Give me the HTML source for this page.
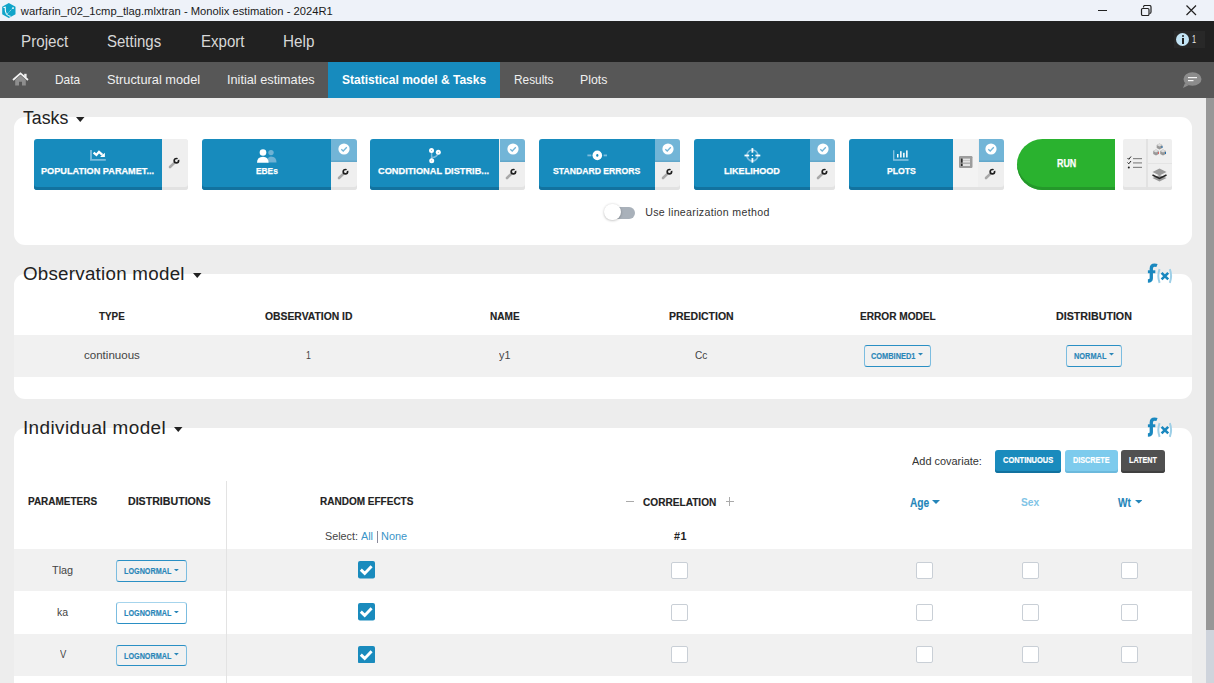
<!DOCTYPE html>
<html><head><meta charset="utf-8">
<style>
*{box-sizing:border-box;margin:0;padding:0}
html,body{width:1214px;height:683px;overflow:hidden;background:#ededed;font-family:"Liberation Sans",sans-serif;position:relative}
.abs{position:absolute}
.t{position:absolute;white-space:nowrap;line-height:1;transform-origin:0 0}
</style></head><body>
<div class="abs" style="left:0px;top:0px;width:1214px;height:21px;background:#eef2f9"></div>
<svg class="abs" style="left:2px;top:3px" width="14" height="15" viewBox="0 0 14 15"><polygon points="6.8,0 13.5,3.8 13.5,11.2 6.8,15 0.2,11.2 0.2,3.8" fill="#10a4c9"/><path d="M1.6,4.2 Q2.2,4.8 3.2,4.3 Q3,9 4.4,11 Q6,12.8 8.5,13.4" fill="none" stroke="#fff" stroke-width="1.1"/><path d="M5.2,11 L10.8,5" stroke="#bfe8f3" stroke-width="0.9" stroke-dasharray="1.2,1"/><rect x="10.4" y="4.2" width="1.3" height="1.8" fill="#fff"/></svg>
<div class="t" style="left:20.82px;top:6.00px;font-size:11.19px;color:#1a1a1a;letter-spacing:0.006px;">warfarin_r02_1cmp_tlag.mlxtran - Monolix estimation - 2024R1</div>
<div class="abs" style="left:1098px;top:10px;width:9px;height:1px;background:#222"></div>
<svg class="abs" style="left:1140px;top:5px" width="13" height="11" viewBox="0 0 13 11"><rect x="1.5" y="3.5" width="7.5" height="7" rx="1.2" fill="none" stroke="#222" stroke-width="1.2"/><path d="M3.5,2.5 V2 Q3.5,0.5 5,0.5 H9.5 Q11,0.5 11,2 V7 Q11,8.5 9.5,8.5" fill="none" stroke="#222" stroke-width="1.2"/></svg>
<svg class="abs" style="left:1186px;top:5px" width="11" height="11" viewBox="0 0 11 11"><path d="M0.5,0.5 L10,10 M10,0.5 L0.5,10" stroke="#222" stroke-width="1.2"/></svg>
<div class="abs" style="left:0px;top:21px;width:1214px;height:41px;background:#212121"></div>
<div class="t" style="left:20.70px;top:34.00px;font-size:15.84px;color:#d8d8d8;transform:scaleX(0.9594);">Project</div>
<div class="t" style="left:106.80px;top:34.00px;font-size:15.84px;color:#d8d8d8;transform:scaleX(0.9469);">Settings</div>
<div class="t" style="left:200.50px;top:34.00px;font-size:15.84px;color:#d8d8d8;transform:scaleX(0.9501);">Export</div>
<div class="t" style="left:283.00px;top:34.00px;font-size:15.84px;color:#d8d8d8;transform:scaleX(0.9635);">Help</div>
<div class="abs" style="left:1174px;top:31px;width:31px;height:17px;background:#282828"></div>
<div class="abs" style="left:1176px;top:33px;width:13.3px;height:13.3px;background:#c3e4f5;border-radius:50%"></div>
<div class="abs" style="left:1181.6px;top:35.3px;width:2.4px;height:1.8px;background:#222;border-radius:1px"></div>
<div class="abs" style="left:1181.6px;top:38.2px;width:2.4px;height:5.8px;background:#222"></div>
<div class="t" style="left:1192.30px;top:34.00px;font-size:11.05px;color:#e8e8e8;transform:scaleX(0.6676);">1</div>
<div class="abs" style="left:0px;top:62.4px;width:1214px;height:35.6px;background:#575757"></div>
<svg class="abs" style="left:12px;top:72px" width="17" height="14" viewBox="0 0 17 14"><path d="M3.2,8 V13.5 H7 V9.8 H10 V13.5 H13.8 V8 L8.5,3.2 Z" fill="#8e8e8e"/><path d="M1,8 L8.5,1.4 L16,8" fill="none" stroke="#f2f2f2" stroke-width="1.8"/><rect x="12.2" y="1.8" width="2.4" height="3.8" fill="#eee"/></svg>
<div class="t" style="left:54.90px;top:73.00px;font-size:13.37px;color:#f0f0f0;transform:scaleX(0.8883);">Data</div>
<div class="t" style="left:106.80px;top:73.00px;font-size:13.37px;color:#f0f0f0;transform:scaleX(0.9573);">Structural model</div>
<div class="t" style="left:227.00px;top:73.00px;font-size:13.37px;color:#f0f0f0;transform:scaleX(0.9516);">Initial estimates</div>
<div class="abs" style="left:328px;top:62.4px;width:171.6px;height:35.6px;background:#178bbe"></div>
<div class="t" style="left:341.70px;top:73.00px;font-size:13.37px;color:#fff;font-weight:bold;transform:scaleX(0.9003);">Statistical model &amp; Tasks</div>
<div class="t" style="left:513.50px;top:73.00px;font-size:13.37px;color:#f0f0f0;transform:scaleX(0.8860);">Results</div>
<div class="t" style="left:580.00px;top:73.00px;font-size:13.37px;color:#f0f0f0;transform:scaleX(0.9217);">Plots</div>
<svg class="abs" style="left:1182px;top:72px" width="20" height="17" viewBox="0 0 20 17"><ellipse cx="10.5" cy="7" rx="9" ry="6.8" fill="#8c8c8c"/><path d="M3,11 L1,16 L7,13 Z" fill="#8c8c8c"/><rect x="6" y="5" width="9" height="1.2" fill="#f4f4f4"/><rect x="6" y="8" width="5.5" height="1.2" fill="#f4f4f4"/></svg>
<div class="abs" style="left:1206px;top:98px;width:8px;height:585px;background:#cfd4dc"></div>
<div class="abs" style="left:1206px;top:98px;width:8px;height:532.4px;background:#979797"></div>
<div class="abs" style="left:14px;top:117.2px;width:1178px;height:127.5px;background:#fff;border-radius:11px"></div>
<div class="t" style="left:23.20px;top:108.00px;font-size:19.19px;color:#222;transform:scaleX(0.9237);">Tasks</div>
<svg class="abs" style="left:76px;top:116.5px" width="9" height="5" viewBox="0 0 9 5"><path d="M0,0 H8.5 L4.25,5 Z" fill="#222"/></svg>
<div class="abs" style="left:36.5px;top:139px;width:151.9px;height:51px;background:#efefef;border-radius:0 3px 3px 0;box-shadow:inset 0 -3px 0 #e2e2e2"></div>
<div class="abs" style="left:33.5px;top:139px;width:128.9px;height:51px;background:#178bbd;border-radius:3px 0 0 3px;box-shadow:inset 0 -3px 0 #12729f"></div>
<div class="abs" style="left:162.4px;top:139px;width:26.0px;height:51px;background:#efefef;border-radius:0 3px 3px 0;box-shadow:inset 0 -3px 0 #e2e2e2"></div>
<div class="t" style="left:41.30px;top:166.00px;font-size:9.59px;color:#fff;font-weight:bold;transform:scaleX(0.9553);-webkit-text-stroke:0.25px #fff;">POPULATION PARAMET...</div>
<svg class="abs" style="left:168.4px;top:157px" width="12" height="12" viewBox="0 0 12 12"><path d="M2,10 L6.6,5.6" stroke="#a9a9a9" stroke-width="2.6" stroke-linecap="round"/><circle cx="8.4" cy="3.7" r="2.2" fill="none" stroke="#1e1e1e" stroke-width="1.7"/><path d="M8.4,3.7 L10.6,0 L12,2.2 Z" fill="#efefef"/></svg>
<div class="abs" style="left:205px;top:139px;width:151.8px;height:51px;background:#efefef;border-radius:0 3px 3px 0;box-shadow:inset 0 -3px 0 #e2e2e2"></div>
<div class="abs" style="left:202px;top:139px;width:129.2px;height:51px;background:#178bbd;border-radius:3px 0 0 3px;box-shadow:inset 0 -3px 0 #12729f"></div>
<div class="abs" style="left:331.2px;top:139px;width:25.600000000000023px;height:51px;background:#efefef;border-radius:0 3px 3px 0;box-shadow:inset 0 -3px 0 #e2e2e2"></div>
<div class="t" style="left:256.00px;top:166.00px;font-size:9.59px;color:#fff;font-weight:bold;transform:scaleX(0.8700);-webkit-text-stroke:0.25px #fff;">EBEs</div>
<div class="abs" style="left:331.2px;top:139px;width:25.600000000000023px;height:23.4px;background:#72b5d7;border-radius:0 3px 0 0;box-shadow:inset 0 -1.5px 0 #62a7ca"></div>
<svg class="abs" style="left:338.2px;top:143px" width="12" height="12" viewBox="0 0 12 12"><circle cx="6" cy="6" r="5.6" fill="#fff"/><path d="M3.3,6.2 L5.2,8 L8.8,4.2" fill="none" stroke="#72b5d7" stroke-width="1.3"/></svg>
<svg class="abs" style="left:337.0px;top:167.5px" width="12" height="12" viewBox="0 0 12 12"><path d="M2,10 L6.6,5.6" stroke="#a9a9a9" stroke-width="2.6" stroke-linecap="round"/><circle cx="8.4" cy="3.7" r="2.2" fill="none" stroke="#1e1e1e" stroke-width="1.7"/><path d="M8.4,3.7 L10.6,0 L12,2.2 Z" fill="#efefef"/></svg>
<div class="abs" style="left:373.4px;top:139px;width:151.89999999999998px;height:51px;background:#efefef;border-radius:0 3px 3px 0;box-shadow:inset 0 -3px 0 #e2e2e2"></div>
<div class="abs" style="left:370.4px;top:139px;width:129.10000000000002px;height:51px;background:#178bbd;border-radius:3px 0 0 3px;box-shadow:inset 0 -3px 0 #12729f"></div>
<div class="abs" style="left:499.5px;top:139px;width:25.799999999999955px;height:51px;background:#efefef;border-radius:0 3px 3px 0;box-shadow:inset 0 -3px 0 #e2e2e2"></div>
<div class="t" style="left:378.20px;top:166.00px;font-size:9.59px;color:#fff;font-weight:bold;transform:scaleX(0.9630);-webkit-text-stroke:0.25px #fff;">CONDITIONAL DISTRIB...</div>
<div class="abs" style="left:499.5px;top:139px;width:25.799999999999955px;height:23.4px;background:#72b5d7;border-radius:0 3px 0 0;box-shadow:inset 0 -1.5px 0 #62a7ca"></div>
<svg class="abs" style="left:506.59999999999997px;top:143px" width="12" height="12" viewBox="0 0 12 12"><circle cx="6" cy="6" r="5.6" fill="#fff"/><path d="M3.3,6.2 L5.2,8 L8.8,4.2" fill="none" stroke="#72b5d7" stroke-width="1.3"/></svg>
<svg class="abs" style="left:505.4px;top:167.5px" width="12" height="12" viewBox="0 0 12 12"><path d="M2,10 L6.6,5.6" stroke="#a9a9a9" stroke-width="2.6" stroke-linecap="round"/><circle cx="8.4" cy="3.7" r="2.2" fill="none" stroke="#1e1e1e" stroke-width="1.7"/><path d="M8.4,3.7 L10.6,0 L12,2.2 Z" fill="#efefef"/></svg>
<div class="abs" style="left:542.3px;top:139px;width:137.9000000000001px;height:51px;background:#efefef;border-radius:0 3px 3px 0;box-shadow:inset 0 -3px 0 #e2e2e2"></div>
<div class="abs" style="left:539.3px;top:139px;width:115.70000000000005px;height:51px;background:#178bbd;border-radius:3px 0 0 3px;box-shadow:inset 0 -3px 0 #12729f"></div>
<div class="abs" style="left:655px;top:139px;width:25.200000000000045px;height:51px;background:#efefef;border-radius:0 3px 3px 0;box-shadow:inset 0 -3px 0 #e2e2e2"></div>
<div class="t" style="left:553.30px;top:166.00px;font-size:9.59px;color:#fff;font-weight:bold;transform:scaleX(0.9027);-webkit-text-stroke:0.25px #fff;">STANDARD ERRORS</div>
<div class="abs" style="left:655px;top:139px;width:25.200000000000045px;height:23.4px;background:#72b5d7;border-radius:0 3px 0 0;box-shadow:inset 0 -1.5px 0 #62a7ca"></div>
<svg class="abs" style="left:661.8000000000001px;top:143px" width="12" height="12" viewBox="0 0 12 12"><circle cx="6" cy="6" r="5.6" fill="#fff"/><path d="M3.3,6.2 L5.2,8 L8.8,4.2" fill="none" stroke="#72b5d7" stroke-width="1.3"/></svg>
<svg class="abs" style="left:660.6px;top:167.5px" width="12" height="12" viewBox="0 0 12 12"><path d="M2,10 L6.6,5.6" stroke="#a9a9a9" stroke-width="2.6" stroke-linecap="round"/><circle cx="8.4" cy="3.7" r="2.2" fill="none" stroke="#1e1e1e" stroke-width="1.7"/><path d="M8.4,3.7 L10.6,0 L12,2.2 Z" fill="#efefef"/></svg>
<div class="abs" style="left:697.2px;top:139px;width:137.89999999999998px;height:51px;background:#efefef;border-radius:0 3px 3px 0;box-shadow:inset 0 -3px 0 #e2e2e2"></div>
<div class="abs" style="left:694.2px;top:139px;width:115.69999999999993px;height:51px;background:#178bbd;border-radius:3px 0 0 3px;box-shadow:inset 0 -3px 0 #12729f"></div>
<div class="abs" style="left:809.9px;top:139px;width:25.200000000000045px;height:51px;background:#efefef;border-radius:0 3px 3px 0;box-shadow:inset 0 -3px 0 #e2e2e2"></div>
<div class="t" style="left:724.20px;top:166.00px;font-size:9.59px;color:#fff;font-weight:bold;transform:scaleX(0.9466);-webkit-text-stroke:0.25px #fff;">LIKELIHOOD</div>
<div class="abs" style="left:809.9px;top:139px;width:25.200000000000045px;height:23.4px;background:#72b5d7;border-radius:0 3px 0 0;box-shadow:inset 0 -1.5px 0 #62a7ca"></div>
<svg class="abs" style="left:816.7px;top:143px" width="12" height="12" viewBox="0 0 12 12"><circle cx="6" cy="6" r="5.6" fill="#fff"/><path d="M3.3,6.2 L5.2,8 L8.8,4.2" fill="none" stroke="#72b5d7" stroke-width="1.3"/></svg>
<svg class="abs" style="left:815.5px;top:167.5px" width="12" height="12" viewBox="0 0 12 12"><path d="M2,10 L6.6,5.6" stroke="#a9a9a9" stroke-width="2.6" stroke-linecap="round"/><circle cx="8.4" cy="3.7" r="2.2" fill="none" stroke="#1e1e1e" stroke-width="1.7"/><path d="M8.4,3.7 L10.6,0 L12,2.2 Z" fill="#efefef"/></svg>
<div class="abs" style="left:852.1px;top:139px;width:151.60000000000002px;height:51px;background:#efefef;border-radius:0 3px 3px 0;box-shadow:inset 0 -3px 0 #e2e2e2"></div>
<div class="abs" style="left:849.1px;top:139px;width:103.60000000000002px;height:51px;background:#178bbd;border-radius:3px 0 0 3px;box-shadow:inset 0 -3px 0 #12729f"></div>
<div class="abs" style="left:952.7px;top:139px;width:25.799999999999955px;height:51px;background:#f3f3f3;box-shadow:inset 0 -3px 0 #e2e2e2"></div>
<div class="abs" style="left:978.5px;top:139px;width:25.200000000000045px;height:51px;background:#efefef;border-radius:0 3px 3px 0;box-shadow:inset 0 -3px 0 #e2e2e2"></div>
<div class="t" style="left:886.60px;top:166.00px;font-size:9.59px;color:#fff;font-weight:bold;transform:scaleX(0.9036);-webkit-text-stroke:0.25px #fff;">PLOTS</div>
<div class="abs" style="left:978.5px;top:139px;width:25.200000000000045px;height:23.4px;background:#72b5d7;border-radius:0 3px 0 0;box-shadow:inset 0 -1.5px 0 #62a7ca"></div>
<svg class="abs" style="left:985.3000000000001px;top:143px" width="12" height="12" viewBox="0 0 12 12"><circle cx="6" cy="6" r="5.6" fill="#fff"/><path d="M3.3,6.2 L5.2,8 L8.8,4.2" fill="none" stroke="#72b5d7" stroke-width="1.3"/></svg>
<svg class="abs" style="left:984.1px;top:167.5px" width="12" height="12" viewBox="0 0 12 12"><path d="M2,10 L6.6,5.6" stroke="#a9a9a9" stroke-width="2.6" stroke-linecap="round"/><circle cx="8.4" cy="3.7" r="2.2" fill="none" stroke="#1e1e1e" stroke-width="1.7"/><path d="M8.4,3.7 L10.6,0 L12,2.2 Z" fill="#efefef"/></svg>
<svg class="abs" style="left:90px;top:150px" width="16" height="12" viewBox="0 0 16 12"><path d="M1,0 V9.9 H15.8" fill="none" stroke="#7bbcdd" stroke-width="1.9"/><path d="M3.6,2.6 L6.4,4.9 L9,1.8 L12.4,4.8" fill="none" stroke="#fff" stroke-width="2.3"/><polygon points="10,6.9 14.9,6.9 14.9,2.8" fill="#fff"/></svg>
<svg class="abs" style="left:256.5px;top:148.5px" width="20" height="14" viewBox="0 0 20 14"><circle cx="14" cy="3.6" r="2.7" fill="#6fb2d4"/><path d="M10,13.5 Q10,7.5 14,7.5 Q19.5,7.5 19.5,13.5 Z" fill="#6fb2d4"/><circle cx="6" cy="3.5" r="3.3" fill="#fff"/><path d="M0,13.8 Q0,7.8 6,7.8 Q11.6,7.8 11.6,13.8 Z" fill="#fff"/></svg>
<svg class="abs" style="left:428px;top:147px" width="14" height="17" viewBox="0 0 14 17"><path d="M3.6,3.4 V13.7 M3.6,10.6 Q9.5,10.2 10.3,5.3" fill="none" stroke="#7bbcdd" stroke-width="1.5"/><circle cx="3.5" cy="3.4" r="2.5" fill="#fff"/><circle cx="10.3" cy="5.3" r="2.5" fill="#fff"/><circle cx="3.7" cy="13.7" r="2.5" fill="#fff"/><circle cx="3.5" cy="3.4" r="0.5" fill="#8ab"/><circle cx="10.3" cy="5.3" r="0.5" fill="#5ab"/><circle cx="3.7" cy="13.7" r="0.5" fill="#8ab"/></svg>
<svg class="abs" style="left:586.5px;top:150px" width="21" height="11" viewBox="0 0 21 11"><rect x="0.4" y="4.5" width="3.9" height="1.8" fill="#7bbcdd"/><rect x="16.6" y="4.5" width="3.4" height="1.8" fill="#7bbcdd"/><circle cx="10.3" cy="5.4" r="4.8" fill="#fff"/><ellipse cx="10.3" cy="5.4" rx="1.1" ry="1.4" fill="#178bbd"/></svg>
<svg class="abs" style="left:743.5px;top:147px" width="17" height="17" viewBox="0 0 17 17"><circle cx="8.4" cy="8.5" r="5.5" fill="none" stroke="#7dbddf" stroke-width="1.6"/><rect x="7.5" y="1.1" width="1.8" height="4.6" fill="#fff"/><rect x="7.5" y="11.1" width="1.8" height="4.6" fill="#fff"/><rect x="0.5" y="7.6" width="4.7" height="1.8" fill="#fff"/><rect x="11.4" y="7.6" width="4.9" height="1.8" fill="#fff"/><circle cx="8.4" cy="8.5" r="0.8" fill="#fff"/></svg>
<svg class="abs" style="left:893px;top:150px" width="16" height="11" viewBox="0 0 16 11"><path d="M0.7,0.3 V10 H15.5" fill="none" stroke="#8cc5e2" stroke-width="1.3"/><rect x="4" y="4" width="1.5" height="3.5" fill="#fff"/><rect x="7.1" y="1.2" width="1.5" height="6.3" fill="#fff"/><rect x="10.1" y="2.8" width="1.5" height="4.7" fill="#fff"/><rect x="13.1" y="0.4" width="1.5" height="7.1" fill="#fff"/></svg>
<svg class="abs" style="left:959px;top:156.2px" width="13.5" height="12" viewBox="0 0 13.5 12"><rect x="0" y="0" width="13.5" height="12" rx="1.2" fill="#9d9d9d"/><rect x="3.4" y="2.6" width="7.6" height="4" fill="#e4e4e4"/><rect x="3.4" y="4.3" width="7.6" height="0.6" fill="#b5b5b5"/><rect x="3.4" y="7.7" width="7.6" height="2.3" fill="#e4e4e4"/><rect x="2" y="2.6" width="1.6" height="4" fill="#2a2a2a"/><rect x="2" y="7.7" width="1.6" height="2.3" fill="#2a2a2a"/></svg>
<div class="abs" style="left:1017.1px;top:139px;width:97.7px;height:51px;background:#2ab22f;border-radius:25.5px 0 0 25.5px;box-shadow:inset 0 -3px 0 #24982a"></div>
<div class="t" style="left:1056.50px;top:159.00px;font-size:10.47px;color:#fff;font-weight:bold;transform:scaleX(0.8510);-webkit-text-stroke:0.25px #fff;">RUN</div>
<div class="abs" style="left:1123.2px;top:139px;width:48.7px;height:51px;background:#efefef;border-radius:2px;box-shadow:inset 0 -3px 0 #e3e3e3"></div>
<div class="abs" style="left:1146.4px;top:139px;width:1.3px;height:51px;background:#e2e2e2"></div>
<div class="abs" style="left:1147px;top:162.6px;width:25px;height:1.5px;background:#e4e4e4"></div>
<svg class="abs" style="left:1127px;top:155.6px" width="16" height="14" viewBox="0 0 16 14"><path d="M0.5,2 L1.8,3.3 L4,0.5 M0.5,6.5 L1.8,7.8 L4,5" fill="none" stroke="#222" stroke-width="1"/><circle cx="1.8" cy="11.5" r="1" fill="#222"/><rect x="6" y="2" width="9" height="1.2" fill="#888"/><rect x="6" y="6.3" width="9" height="1.2" fill="#888"/><rect x="6" y="10.8" width="9" height="1.2" fill="#888"/></svg>
<svg class="abs" style="left:1152px;top:143px" width="15" height="13" viewBox="0 0 15 13"><path d="M7.5,0.5 L10.3,2 V5 L7.5,6.5 L4.7,5 V2 Z" fill="#999"/><path d="M4,6.5 L6.8,8 V11 L4,12.5 L1.2,11 V8 Z" fill="#999"/><path d="M11,6.5 L13.8,8 V11 L11,12.5 L8.2,11 V8 Z" fill="#999"/><path d="M7.5,0.5 L10.3,2 L7.5,3.5 L4.7,2 Z" fill="#ddd"/><path d="M4,6.5 L6.8,8 L4,9.5 L1.2,8 Z" fill="#ddd"/><path d="M11,6.5 L13.8,8 L11,9.5 L8.2,8 Z" fill="#ddd"/><rect x="9.5" y="3" width="1" height="2" fill="#1f6fb0"/><rect x="6" y="9" width="1" height="2" fill="#d66"/><rect x="13" y="9" width="1" height="2" fill="#1f6fb0"/></svg>
<svg class="abs" style="left:1152px;top:168px" width="15" height="14" viewBox="0 0 15 14"><path d="M7.5,7 L14.5,10 L7.5,13.5 L0.5,10 Z" fill="#999"/><path d="M0.5,7 L7.5,10.5 L14.5,7" fill="none" stroke="#222" stroke-width="1.4"/><path d="M7.5,0.5 L14.5,4 L7.5,7.5 L0.5,4 Z" fill="#999"/></svg>
<div class="abs" style="left:609px;top:207px;width:26px;height:11.7px;background:#a9b1ba;border-radius:5.9px"></div>
<div class="abs" style="left:604.1px;top:203.7px;width:16.8px;height:16.8px;background:#fff;border-radius:50%;box-shadow:0 0.5px 2.5px rgba(0,0,0,0.3)"></div>
<div class="t" style="left:645.20px;top:207.00px;font-size:10.61px;color:#333;letter-spacing:0.320px;">Use linearization method</div>
<div class="abs" style="left:14px;top:273.6px;width:1178px;height:125.1px;background:#fff;border-radius:11px"></div>
<div class="t" style="left:22.90px;top:265.00px;font-size:18.75px;color:#222;letter-spacing:0.264px;">Observation model</div>
<svg class="abs" style="left:192.6px;top:272.5px" width="9" height="5" viewBox="0 0 9 5"><path d="M0,0 H8.5 L4.25,5 Z" fill="#222"/></svg>
<svg class="abs" style="left:1147px;top:262.5px" width="27" height="22" viewBox="0 0 27 22"><path d="M10,2.5 Q9,2.1 7.6,2.1 Q4.3,2.1 4.3,5.5 V15.2 Q4.3,18 0.9,18" fill="none" stroke="#1a88bf" stroke-width="3.3"/><rect x="0.9" y="7.3" width="7.4" height="2.9" fill="#1a88bf"/><path d="M12.6,6.2 Q10,13 12.6,19.8 M22.8,6.2 Q25.4,13 22.8,19.8" fill="none" stroke="#9dcfe7" stroke-width="2"/><path d="M14.6,9.8 L21.2,16.4 M21.2,9.8 L14.6,16.4" stroke="#1a88bf" stroke-width="2.6"/></svg>
<div class="t" style="left:99.00px;top:311.00px;font-size:11.19px;color:#222;font-weight:bold;transform:scaleX(0.8791);-webkit-text-stroke:0.15px #222;">TYPE</div>
<div class="t" style="left:264.60px;top:311.00px;font-size:11.19px;color:#222;font-weight:bold;transform:scaleX(0.9258);-webkit-text-stroke:0.15px #222;">OBSERVATION ID</div>
<div class="t" style="left:489.70px;top:311.00px;font-size:11.19px;color:#222;font-weight:bold;transform:scaleX(0.8984);-webkit-text-stroke:0.15px #222;">NAME</div>
<div class="t" style="left:668.80px;top:311.00px;font-size:11.19px;color:#222;font-weight:bold;transform:scaleX(0.9374);-webkit-text-stroke:0.15px #222;">PREDICTION</div>
<div class="t" style="left:859.60px;top:311.00px;font-size:11.19px;color:#222;font-weight:bold;transform:scaleX(0.9030);-webkit-text-stroke:0.15px #222;">ERROR MODEL</div>
<div class="t" style="left:1056.00px;top:311.00px;font-size:11.19px;color:#222;font-weight:bold;transform:scaleX(0.9537);-webkit-text-stroke:0.15px #222;">DISTRIBUTION</div>
<div class="abs" style="left:14px;top:335px;width:1178px;height:41.7px;background:#f1f1f1"></div>
<div class="t" style="left:84.00px;top:350.00px;font-size:11.55px;color:#444;">continuous</div>
<div class="t" style="left:305.90px;top:350.00px;font-size:11.48px;color:#444;transform:scaleX(0.7675);">1</div>
<div class="t" style="left:498.80px;top:350.00px;font-size:11.55px;color:#444;transform:scaleX(0.9344);">y1</div>
<div class="t" style="left:694.70px;top:350.00px;font-size:11.48px;color:#444;transform:scaleX(0.8837);">Cc</div>
<div class="abs" style="left:863.6px;top:345px;width:67.5px;height:22px;border:1px solid #7cbde0;border-top-color:#2a8fc4;border-bottom-color:#2a8fc4;border-radius:3px"></div>
<div class="t" style="left:871.20px;top:352.00px;font-size:8.72px;color:#2a86b8;font-weight:bold;transform:scaleX(0.8484);-webkit-text-stroke:0.15px #2a86b8;">COMBINED1</div>
<svg class="abs" style="left:918px;top:353.3px" width="5" height="2.5" viewBox="0 0 5 3" preserveAspectRatio="none"><path d="M0,0 H5 L2.5,3 Z" fill="#2a86b8"/></svg>
<div class="abs" style="left:1065.9px;top:345px;width:56.0px;height:22px;border:1px solid #7cbde0;border-top-color:#2a8fc4;border-bottom-color:#2a8fc4;border-radius:3px"></div>
<div class="t" style="left:1074.10px;top:352.00px;font-size:8.72px;color:#2a86b8;font-weight:bold;transform:scaleX(0.8467);-webkit-text-stroke:0.15px #2a86b8;">NORMAL</div>
<svg class="abs" style="left:1109px;top:353.3px" width="5" height="2.5" viewBox="0 0 5 3" preserveAspectRatio="none"><path d="M0,0 H5 L2.5,3 Z" fill="#2a86b8"/></svg>
<div class="abs" style="left:14px;top:428px;width:1178px;height:300px;background:#fff;border-radius:11px"></div>
<div class="t" style="left:22.90px;top:419.00px;font-size:18.90px;color:#222;letter-spacing:0.423px;">Individual model</div>
<svg class="abs" style="left:173.8px;top:427px" width="9" height="5" viewBox="0 0 9 5"><path d="M0,0 H8.5 L4.25,5 Z" fill="#222"/></svg>
<svg class="abs" style="left:1147px;top:417px" width="27" height="22" viewBox="0 0 27 22"><path d="M10,2.5 Q9,2.1 7.6,2.1 Q4.3,2.1 4.3,5.5 V15.2 Q4.3,18 0.9,18" fill="none" stroke="#1a88bf" stroke-width="3.3"/><rect x="0.9" y="7.3" width="7.4" height="2.9" fill="#1a88bf"/><path d="M12.6,6.2 Q10,13 12.6,19.8 M22.8,6.2 Q25.4,13 22.8,19.8" fill="none" stroke="#9dcfe7" stroke-width="2"/><path d="M14.6,9.8 L21.2,16.4 M21.2,9.8 L14.6,16.4" stroke="#1a88bf" stroke-width="2.6"/></svg>
<div class="t" style="left:912.30px;top:456.00px;font-size:11.48px;color:#333;transform:scaleX(0.9536);">Add covariate:</div>
<div class="abs" style="left:995.2px;top:450.1px;width:66.20000000000005px;height:23.4px;background:#1a8bbd;border-radius:3px;box-shadow:inset 0 -2px 0 #12729f"></div>
<div class="t" style="left:1003.20px;top:456.00px;font-size:8.43px;color:#fff;font-weight:bold;transform:scaleX(0.8859);-webkit-text-stroke:0.2px #fff;">CONTINUOUS</div>
<div class="abs" style="left:1065.2px;top:450.1px;width:52.59999999999991px;height:23.4px;background:#7dcbed;border-radius:3px;box-shadow:inset 0 -2px 0 #6cb9dc"></div>
<div class="t" style="left:1073.20px;top:456.00px;font-size:8.43px;color:#fff;font-weight:bold;transform:scaleX(0.8587);-webkit-text-stroke:0.2px #fff;">DISCRETE</div>
<div class="abs" style="left:1121.1px;top:450.1px;width:43.90000000000009px;height:23.4px;background:#505050;border-radius:3px;box-shadow:inset 0 -2px 0 #404040"></div>
<div class="t" style="left:1129.10px;top:456.00px;font-size:8.43px;color:#fff;font-weight:bold;transform:scaleX(0.8552);-webkit-text-stroke:0.2px #fff;">LATENT</div>
<div class="abs" style="left:226.3px;top:481px;width:1px;height:210px;background:#e3e3e3"></div>
<div class="t" style="left:28.10px;top:496.00px;font-size:10.90px;color:#222;font-weight:bold;transform:scaleX(0.9152);-webkit-text-stroke:0.15px #222;">PARAMETERS</div>
<div class="t" style="left:127.70px;top:496.00px;font-size:10.90px;color:#222;font-weight:bold;transform:scaleX(0.9754);-webkit-text-stroke:0.15px #222;">DISTRIBUTIONS</div>
<div class="t" style="left:319.50px;top:496.00px;font-size:10.90px;color:#222;font-weight:bold;transform:scaleX(0.9190);-webkit-text-stroke:0.15px #222;">RANDOM EFFECTS</div>
<div class="abs" style="left:626.4px;top:501.2px;width:7.5px;height:1px;background:#aaa"></div>
<div class="t" style="left:643.40px;top:497.00px;font-size:11.05px;color:#222;font-weight:bold;transform:scaleX(0.9141);-webkit-text-stroke:0.15px #222;">CORRELATION</div>
<div class="abs" style="left:725.8px;top:501.2px;width:8.3px;height:1px;background:#aaa"></div>
<div class="abs" style="left:729.45px;top:497.3px;width:1px;height:8.3px;background:#aaa"></div>
<div class="t" style="left:910.20px;top:497.00px;font-size:12.21px;color:#2585b9;font-weight:bold;transform:scaleX(0.8368);-webkit-text-stroke:0.1px #2585b9;">Age</div>
<svg class="abs" style="left:931.5px;top:500.2px" width="8" height="4" viewBox="0 0 8 4"><path d="M0,0 H8 L4,4 Z" fill="#2585b9"/></svg>
<div class="t" style="left:1021.30px;top:496.00px;font-size:11.77px;color:#80c4e6;font-weight:bold;transform:scaleX(0.8690);">Sex</div>
<div class="t" style="left:1117.70px;top:497.00px;font-size:12.21px;color:#2585b9;font-weight:bold;transform:scaleX(0.8274);-webkit-text-stroke:0.1px #2585b9;">Wt</div>
<svg class="abs" style="left:1134.6px;top:500px" width="7.5" height="3.6" viewBox="0 0 8 4" preserveAspectRatio="none"><path d="M0,0 H8 L4,4 Z" fill="#2585b9"/></svg>
<div class="t" style="left:324.60px;top:530.00px;font-size:11.63px;color:#444;transform:scaleX(0.9255);">Select:</div>
<div class="t" style="left:360.50px;top:530.00px;font-size:11.63px;color:#3a95c8;transform:scaleX(0.9289);">All</div>
<div class="abs" style="left:376.6px;top:531.3px;width:1px;height:11.5px;background:#8a8a9a"></div>
<div class="t" style="left:381.00px;top:530.00px;font-size:11.63px;color:#3a95c8;transform:scaleX(0.9388);">None</div>
<div class="t" style="left:674.00px;top:531.00px;font-size:10.76px;color:#222;font-weight:bold;letter-spacing:0.540px;">#1</div>
<div class="abs" style="left:14px;top:549px;width:1178px;height:42px;background:#f1f1f1"></div>
<div class="t" style="left:52.30px;top:564.00px;font-size:11.63px;color:#444;transform:scaleX(0.9330);">Tlag</div>
<div class="abs" style="left:116px;top:560px;width:70.6px;height:21.799999999999955px;border:1px solid #7cbde0;border-top-color:#2a8fc4;border-bottom-color:#2a8fc4;border-radius:3px"></div>
<div class="t" style="left:123.70px;top:567.00px;font-size:8.72px;color:#2a86b8;font-weight:bold;transform:scaleX(0.8274);-webkit-text-stroke:0.15px #2a86b8;">LOGNORMAL</div>
<svg class="abs" style="left:173.8px;top:568.9000000000001px" width="4.799999999999983" height="2.5" viewBox="0 0 5 3" preserveAspectRatio="none"><path d="M0,0 H5 L2.5,3 Z" fill="#2a86b8"/></svg>
<svg class="abs" style="left:358px;top:561.4px" width="17" height="17.5" viewBox="0 0 17 17.5"><rect x="0" y="0" width="17" height="17.5" rx="2" fill="#1a8bbd"/><path d="M2.8,8.6 L6.7,12.4 L13.6,5.2" fill="none" stroke="#fff" stroke-width="2.9"/></svg>
<div class="abs" style="left:671.1px;top:561.5px;width:17.399999999999977px;height:17.4px;background:#fff;border:1px solid #c9cfd6;border-radius:2px"></div>
<div class="abs" style="left:916px;top:561.5px;width:17px;height:17.4px;background:#fff;border:1px solid #c9cfd6;border-radius:2px"></div>
<div class="abs" style="left:1022px;top:561.5px;width:16.700000000000045px;height:17.4px;background:#fff;border:1px solid #c9cfd6;border-radius:2px"></div>
<div class="abs" style="left:1121.1px;top:561.5px;width:16.600000000000136px;height:17.4px;background:#fff;border:1px solid #c9cfd6;border-radius:2px"></div>
<div class="t" style="left:57.10px;top:606.00px;font-size:11.63px;color:#444;transform:scaleX(0.9031);">ka</div>
<div class="abs" style="left:116px;top:602px;width:70.6px;height:21.799999999999955px;border:1px solid #7cbde0;border-top-color:#a6d4ec;border-bottom-color:#2a8fc4;border-radius:3px"></div>
<div class="t" style="left:123.70px;top:609.00px;font-size:8.72px;color:#2a86b8;font-weight:bold;transform:scaleX(0.8274);-webkit-text-stroke:0.15px #2a86b8;">LOGNORMAL</div>
<svg class="abs" style="left:173.8px;top:610.9000000000001px" width="4.799999999999983" height="2.5" viewBox="0 0 5 3" preserveAspectRatio="none"><path d="M0,0 H5 L2.5,3 Z" fill="#2a86b8"/></svg>
<svg class="abs" style="left:358px;top:603.4px" width="17" height="17.5" viewBox="0 0 17 17.5"><rect x="0" y="0" width="17" height="17.5" rx="2" fill="#1a8bbd"/><path d="M2.8,8.6 L6.7,12.4 L13.6,5.2" fill="none" stroke="#fff" stroke-width="2.9"/></svg>
<div class="abs" style="left:671.1px;top:603.5px;width:17.399999999999977px;height:17.4px;background:#fff;border:1px solid #c9cfd6;border-radius:2px"></div>
<div class="abs" style="left:916px;top:603.5px;width:17px;height:17.4px;background:#fff;border:1px solid #c9cfd6;border-radius:2px"></div>
<div class="abs" style="left:1022px;top:603.5px;width:16.700000000000045px;height:17.4px;background:#fff;border:1px solid #c9cfd6;border-radius:2px"></div>
<div class="abs" style="left:1121.1px;top:603.5px;width:16.600000000000136px;height:17.4px;background:#fff;border:1px solid #c9cfd6;border-radius:2px"></div>
<div class="abs" style="left:14px;top:633.5px;width:1178px;height:42.10000000000002px;background:#f1f1f1"></div>
<div class="t" style="left:59.70px;top:648.00px;font-size:11.63px;color:#444;transform:scaleX(0.8123);">V</div>
<div class="abs" style="left:116px;top:644.5px;width:70.6px;height:21.799999999999955px;border:1px solid #7cbde0;border-top-color:#2a8fc4;border-bottom-color:#2a8fc4;border-radius:3px"></div>
<div class="t" style="left:123.70px;top:652.00px;font-size:8.72px;color:#2a86b8;font-weight:bold;transform:scaleX(0.8274);-webkit-text-stroke:0.15px #2a86b8;">LOGNORMAL</div>
<svg class="abs" style="left:173.8px;top:653.4000000000001px" width="4.799999999999983" height="2.5" viewBox="0 0 5 3" preserveAspectRatio="none"><path d="M0,0 H5 L2.5,3 Z" fill="#2a86b8"/></svg>
<svg class="abs" style="left:358px;top:645.9px" width="17" height="17.5" viewBox="0 0 17 17.5"><rect x="0" y="0" width="17" height="17.5" rx="2" fill="#1a8bbd"/><path d="M2.8,8.6 L6.7,12.4 L13.6,5.2" fill="none" stroke="#fff" stroke-width="2.9"/></svg>
<div class="abs" style="left:671.1px;top:646.0px;width:17.399999999999977px;height:17.4px;background:#fff;border:1px solid #c9cfd6;border-radius:2px"></div>
<div class="abs" style="left:916px;top:646.0px;width:17px;height:17.4px;background:#fff;border:1px solid #c9cfd6;border-radius:2px"></div>
<div class="abs" style="left:1022px;top:646.0px;width:16.700000000000045px;height:17.4px;background:#fff;border:1px solid #c9cfd6;border-radius:2px"></div>
<div class="abs" style="left:1121.1px;top:646.0px;width:16.600000000000136px;height:17.4px;background:#fff;border:1px solid #c9cfd6;border-radius:2px"></div>
<div class="abs" style="left:226.3px;top:481px;width:1px;height:210px;background:#e3e3e3"></div>
</body></html>
